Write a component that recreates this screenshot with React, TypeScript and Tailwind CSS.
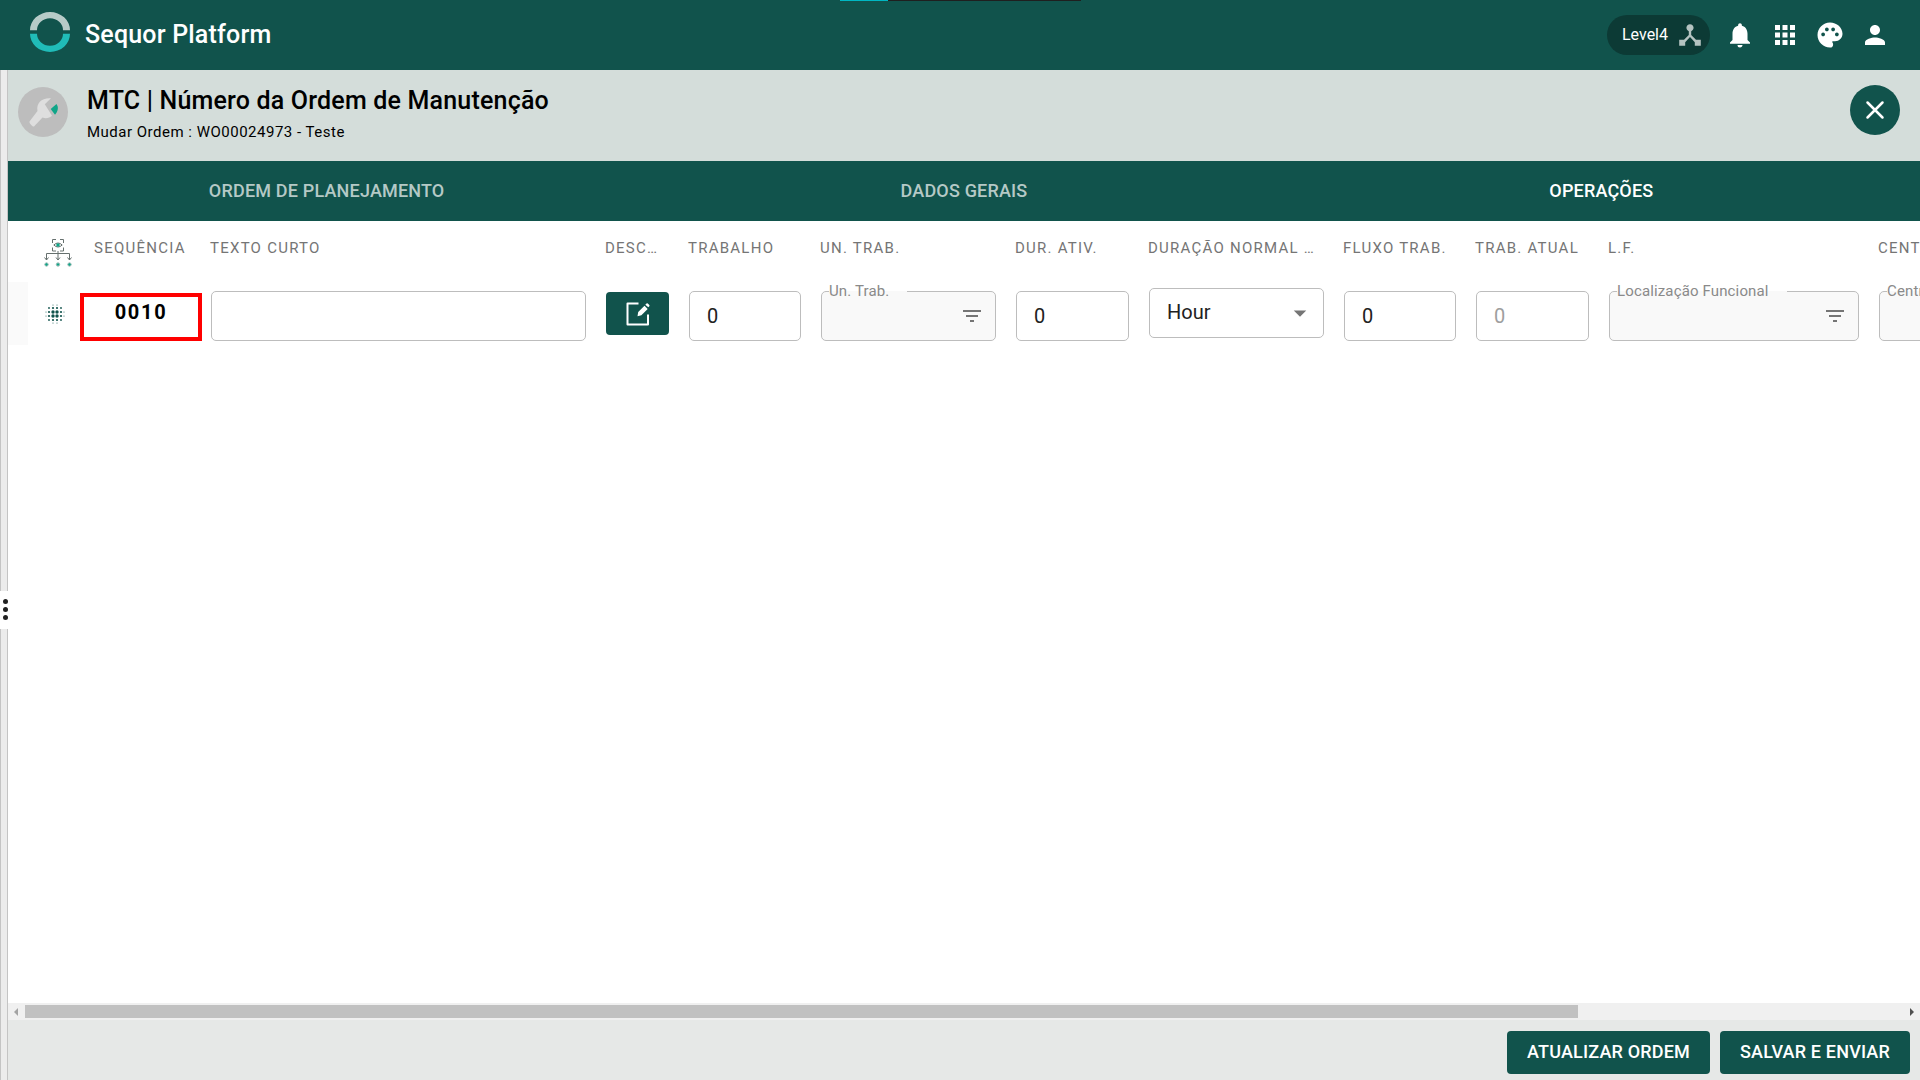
import type { ReactNode } from "react";
import { MdApps, MdNotifications, MdPalette, MdPerson, MdFilterList, MdArrowDropDown } from "react-icons/md";

function Logo() {
  return (
    <svg className="size-10" viewBox="0 0 40 40" aria-hidden="true">
      <path d="M0 18.3A20 18.3 0 0 1 40 18.3H33A13 12 0 0 0 7 18.3Z" fill="#b7cbc8" />
      <path d="M0 21.7A20 18.3 0 0 0 40 21.7H33A13 12 0 0 1 7 21.7Z" fill="#20bcb8" />
    </svg>
  );
}

function WrenchBadge() {
  return (
    <svg className="size-[50px]" viewBox="0 0 50 50" aria-hidden="true">
      <circle cx="25" cy="25" r="25" fill="#bdbdbd" />
      <path
        d="M33 11.3C24 10.5 18 16 19.5 24L11.5 34.5C11 36 14.5 40 16 39.5L24.500 30.500C28 32 31.500 31 34 28.800L26.800 17.300Z"
        fill="#dedede"
      />
      <path d="M32.700 22L38.500 17C40.500 20 40.500 23.500 37 27.800Z" fill="#0fa588" />
    </svg>
  );
}

function LevelIcon() {
  return (
    <svg className="size-6" viewBox="0 0 24 24" fill="#b5c3c1" aria-hidden="true">
      <path
        d="M17 16l-4-4V8.820C14.160 8.400 15 7.300 15 6c0-1.660-1.340-3-3-3S9 4.340 9 6c0 1.300.840 2.400 2 2.820V12l-4 4H3v5h5v-3.050l4-4.200 4 4.200V21h5v-5h-4z"
        transform="translate(-2.400 -2.400) scale(1.200)"
      />
    </svg>
  );
}

function TreeIcon() {
  return (
    <svg className="h-[30px] w-7" viewBox="0 0 28 30" fill="none" stroke="#66706e" strokeWidth="1" aria-hidden="true">
      <path d="M8.500 5V1.500H12M16 1.500h3.500V5M19.500 9.500V13H16M12 13H8.500V9.500M14 13v9M2.500 22v-6.500h23V22M.500 19.500l2 2.500 2-2.500M12 19.500l2 2.500 2-2.500M23.500 19.500l2 2.500 2-2.500" />
      <path d="M9.800 7q4.200-4 8.400 0q-4.200 4-8.400 0Z" />
      <circle cx="14" cy="7" r="1.800" fill="#0fa588" stroke="none" />
      <g fill="#0fa588" stroke="#a3bfba">
        <circle cx="2.500" cy="26.500" r="1.700" />
        <circle cx="14" cy="26.500" r="1.700" />
        <circle cx="25.500" cy="26.500" r="1.700" />
      </g>
    </svg>
  );
}

const dotStops = [1, 4, 8, 12, 16, 19];

function dotRadius(a: number, b: number) {
  if (a + b < 2) return 0;
  if (a + b === 4) return 1.7;
  if (a + b === 3) return 1.1;
  return a === 1 ? 0.9 : 0.5;
}

function DragDots() {
  return (
    <svg className="size-5" viewBox="0 0 20 20" fill="#11534c" aria-hidden="true">
      {dotStops.map((x, i) =>
        dotStops.map((y, j) => (
          <circle key={`${x}-${y}`} cx={x} cy={y} r={dotRadius(Math.min(i, 5 - i), Math.min(j, 5 - j))} />
        )),
      )}
    </svg>
  );
}

function EditIcon() {
  return (
    <svg className="size-6" viewBox="0 0 24 24" fill="none" aria-hidden="true">
      <path d="M12.500 1.500H1.500V22.500H22V12.500" stroke="#fff" strokeWidth="2" strokeLinejoin="round" />
      <path
        d="M11.500 14.200l.700-4.200 6.300-6.300 3.200 3.200-6.300 6.300zM19.300 2.700l1.200-1.200q.700-.500 1.300 0l1.500 1.500q.500.700 0 1.300l-1 1z"
        fill="#fff"
      />
    </svg>
  );
}

const fieldBox =
  "h-[50px] w-full rounded-[5px] border border-[#bdbdbd] bg-white px-[17px] text-xl text-[#212121] outline-none disabled:text-[#9e9e9e]";

function NumberField({ label, disabled }: { label: string; disabled?: boolean }) {
  return <input aria-label={label} defaultValue="0" disabled={disabled} className={fieldBox} />;
}

function LookupField({ id, label }: { id: string; label: string }) {
  return (
    <div className="relative h-[50px] rounded-[5px] border border-[#bdbdbd] bg-[#f9f9f9]">
      <label
        htmlFor={id}
        className="absolute -top-[10px] left-[7px] z-10 text-[15px] leading-[18px] tracking-[0.00938em] whitespace-nowrap text-[#8a8a8a]"
      >
        <span className="absolute top-[9px] -right-[18px] left-0 -z-10 h-px bg-[#f9f9f9]" />
        {label}
      </label>
      <input id={id} className="size-full bg-transparent px-4 text-xl outline-none" />
      <button type="button" aria-label={`Filtrar ${label}`} className="absolute top-3 right-[11px] text-[#757575]">
        <MdFilterList className="size-6" />
      </button>
    </div>
  );
}

const columns: { title: string; width: string }[] = [
  { title: "Sequência", width: "w-[120px]" },
  { title: "Texto Curto", width: "w-[395px]" },
  { title: "Desc…", width: "w-[83px]" },
  { title: "Trabalho", width: "w-[132px]" },
  { title: "Un. Trab.", width: "w-[195px]" },
  { title: "Dur. Ativ.", width: "w-[133px]" },
  { title: "Duração Normal …", width: "w-[195px]" },
  { title: "Fluxo Trab.", width: "w-[132px]" },
  { title: "Trab. Atual", width: "w-[133px]" },
  { title: "L.F.", width: "w-[270px]" },
  { title: "Centro Trab.", width: "w-[270px]" },
];

function Cell({ children }: { children: ReactNode }) {
  return <td className="px-[10px] pt-[9px] align-top">{children}</td>;
}

function OperationsTable() {
  return (
    <table className="w-[2131px] table-fixed border-collapse">
      <colgroup>
        <col className="w-[73px]" />
        {columns.map((c) => (
          <col key={c.title} className={c.width} />
        ))}
      </colgroup>
      <thead>
        <tr className="h-[61px]">
          <th aria-label="Hierarquia" className="pt-[17px] pl-9 align-top">
            <TreeIcon />
          </th>
          {columns.map((c, i) => (
            <th key={c.title} scope="col" className={i === 0 ? "pt-[17px] pl-[13px] align-top" : "pt-[17px] pl-[9px] align-top"}>
              <div className="text-left text-[15px] leading-5 font-normal tracking-[0.08333em] whitespace-nowrap text-[#757575] uppercase">
                {c.title}
              </div>
            </th>
          ))}
        </tr>
      </thead>
      <tbody>
        <tr className="h-[63px]">
          <td className="p-0 align-top">
            <div className="flex h-[63px] items-center">
              <div className="h-full w-5 bg-[#fafafa]" />
              <button type="button" aria-label="Mover linha" className="ml-[17px]">
                <DragDots />
              </button>
            </div>
          </td>
          <td className="pt-[11px] align-top">
            <div className="-mx-px h-12 border-4 border-[#ff0000] pt-[3px] text-center text-xl leading-6 font-bold tracking-[0.08333em] text-black">
              0010
            </div>
          </td>
          <Cell>
            <input aria-label="Texto Curto" className={fieldBox} />
          </Cell>
          <Cell>
            <button
              type="button"
              aria-label="Editar descrição"
              className="mt-px flex h-[43px] w-full items-center justify-center rounded bg-[#11534c]"
            >
              <EditIcon />
            </button>
          </Cell>
          <Cell>
            <NumberField label="Trabalho" />
          </Cell>
          <Cell>
            <LookupField id="un-trab" label="Un. Trab." />
          </Cell>
          <Cell>
            <NumberField label="Dur. Ativ." />
          </Cell>
          <td className="px-[10px] pt-[6px] align-top">
            <div className="relative">
              <select aria-label="Duração Normal" className={`${fieldBox} appearance-none pb-0.5`}>
                <option>Hour</option>
              </select>
              <MdArrowDropDown className="pointer-events-none absolute top-[10px] right-[9px] size-[30px] text-[#757575]" />
            </div>
          </td>
          <Cell>
            <NumberField label="Fluxo Trab." />
          </Cell>
          <Cell>
            <NumberField label="Trab. Atual" disabled />
          </Cell>
          <Cell>
            <LookupField id="loc-func" label="Localização Funcional" />
          </Cell>
          <Cell>
            <LookupField id="centro" label="Centro Trab." />
          </Cell>
        </tr>
      </tbody>
    </table>
  );
}

function ScrollBar() {
  return (
    <div className="flex h-[17px] items-center bg-[#f0f0f0]">
      <button type="button" aria-label="Rolar para a esquerda" className="flex w-[17px] justify-center pr-0.5">
        <svg className="h-2 w-1" viewBox="0 0 4 8" fill="#a3a3a3">
          <path d="M4 0v8L0 4z" />
        </svg>
      </button>
      <div className="flex-1">
        <div className="h-[13px] w-[82.7%] bg-[#c1c1c1]" />
      </div>
      <button type="button" aria-label="Rolar para a direita" className="flex w-[17px] justify-center">
        <svg className="h-2 w-1" viewBox="0 0 4 8" fill="#505050">
          <path d="M0 0v8l4-4z" />
        </svg>
      </button>
    </div>
  );
}

const tabs = ["Ordem de Planejamento", "Dados Gerais", "Operações"];

const actionButton = "h-[43px] rounded bg-[#11534c] px-5 pb-0.5 text-lg leading-6 font-medium tracking-[0.01em] text-white uppercase";

export default function App() {
  return (
    <div className="flex h-screen flex-col overflow-hidden bg-white font-[Roboto,sans-serif] text-black">
      <header className="relative flex h-[70px] shrink-0 items-center justify-between bg-[#11534c] pr-[30px] pl-[30px] text-white">
        <div className="absolute top-0 left-[840px] flex h-px w-[241px]">
          <div className="w-12 bg-[#00b7c3]" />
          <div className="flex-1 bg-[#1f1f1f]" />
        </div>
        <div className="flex items-center gap-[15px]">
          <div className="-mt-1.5">
            <Logo />
          </div>
          <h1 className="text-[25px] leading-8 font-medium tracking-[0.0075em]">Sequor Platform</h1>
        </div>
        <div className="flex items-center gap-[15px]">
          <button type="button" className="flex h-10 items-center gap-[10px] rounded-full bg-[#0c3a35] pr-2 pl-[15px] text-base">
            Level4
            <LevelIcon />
          </button>
          <button type="button" aria-label="Notificações">
            <MdNotifications className="size-[30px]" />
          </button>
          <button type="button" aria-label="Aplicativos">
            <MdApps className="size-[30px]" />
          </button>
          <button type="button" aria-label="Tema">
            <MdPalette className="size-[30px]" />
          </button>
          <button type="button" aria-label="Perfil">
            <MdPerson className="size-[30px]" />
          </button>
        </div>
      </header>

      <div className="flex min-h-0 flex-1">
        <div className="flex w-2 shrink-0 flex-col">
          <div className="flex-1 border-x border-[#c4c4c4] bg-[#ececec]" />
          <button
            type="button"
            aria-label="Abrir painel"
            className="flex h-[38px] flex-col items-center justify-center gap-[3px] bg-white pb-0.5 pl-0.5"
          >
            <span className="size-[5px] rounded-full bg-[#212121]" />
            <span className="size-[5px] rounded-full bg-[#212121]" />
            <span className="size-[5px] rounded-full bg-[#212121]" />
          </button>
          <div className="h-[451px] border-x border-[#c4c4c4] bg-[#ececec]" />
        </div>

        <main className="flex min-w-0 flex-1 flex-col">
          <div className="flex h-[91px] shrink-0 items-start bg-[#d4ddda] pt-[15px] pr-5 pl-[10px]">
            <div className="mt-0.5">
              <WrenchBadge />
            </div>
            <div className="ml-[19px] flex-1">
              <h2 className="text-[25px] leading-8 font-medium tracking-[0.0075em]">MTC | Número da Ordem de Manutenção</h2>
              <p className="mt-[5px] text-[15px] leading-5 tracking-[0.03333em]">Mudar Ordem : WO00024973 - Teste</p>
            </div>
            <button
              type="button"
              aria-label="Fechar"
              className="flex size-[50px] items-center justify-center rounded-full bg-[#11534c] text-white"
            >
              <svg className="size-6" viewBox="0 0 24 24" stroke="currentColor" strokeWidth="2.500" strokeLinecap="round">
                <path d="M4.500 4.500l15 15M19.500 4.500l-15 15" />
              </svg>
            </button>
          </div>

          <nav className="grid h-[60px] shrink-0 grid-cols-3 bg-[#11534c]">
            {tabs.map((t) => (
              <button
                key={t}
                type="button"
                aria-current={t === "Operações" ? "page" : undefined}
                className="text-lg font-medium tracking-[0.01em] text-[#b5c9c6] uppercase aria-[current=page]:text-white"
              >
                {t}
              </button>
            ))}
          </nav>

          <div className="min-h-0 flex-1 overflow-hidden">
            <OperationsTable />
          </div>
          <ScrollBar />

          <footer className="flex h-[60px] shrink-0 justify-end gap-[10px] bg-[#e6e8e7] pt-[11px] pr-[10px]">
            <button type="button" className={actionButton}>
              Atualizar Ordem
            </button>
            <button type="button" className={actionButton}>
              Salvar e Enviar
            </button>
          </footer>
        </main>
      </div>
    </div>
  );
}
